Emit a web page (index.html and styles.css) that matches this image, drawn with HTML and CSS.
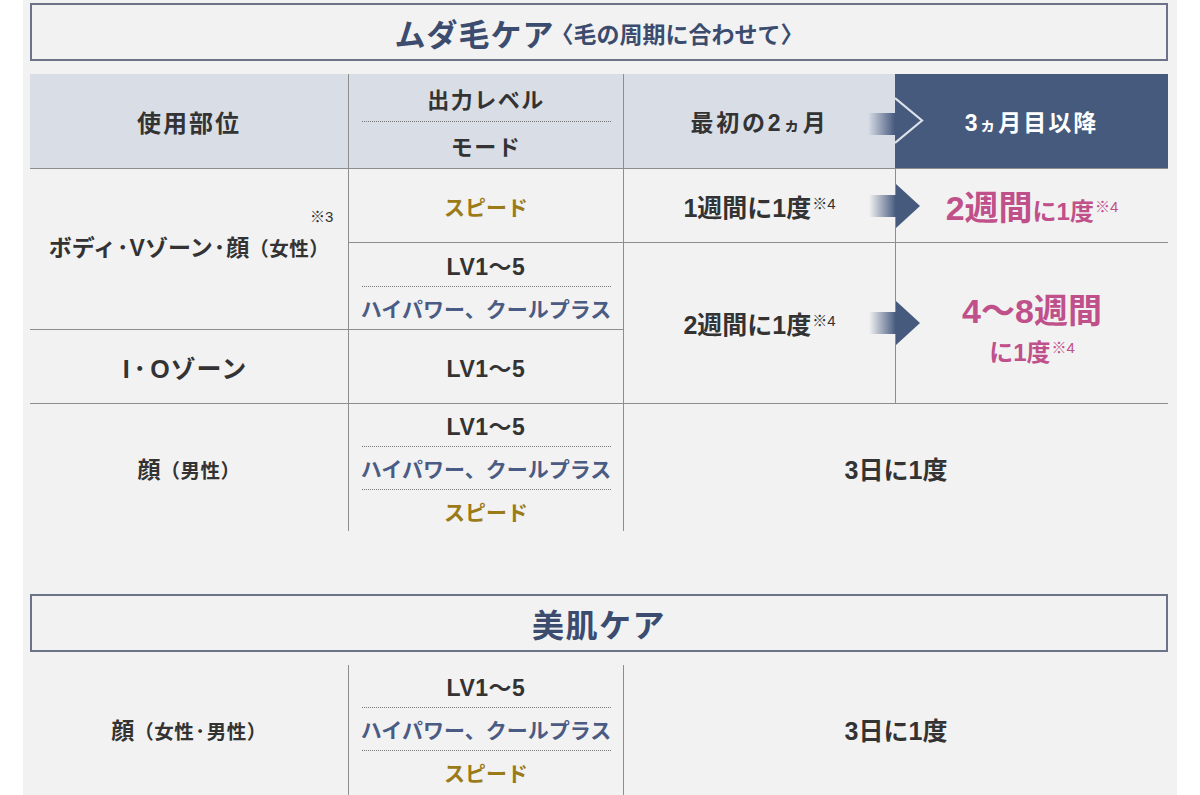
FILE: index.html
```html
<!DOCTYPE html>
<html lang="ja">
<head>
<meta charset="utf-8">
<link rel="stylesheet" href="styles.css">
</head>
<body>
<div class="panel">
  <div class="title-box">
    <span class="title-main">ムダ毛ケア</span><span class="title-sub">〈毛の周期に合わせて〉</span>
  </div>

  <div class="grid g1">
    <div class="hd h1"><span class="hd-label">使用部位</span></div>
    <div class="hd h2">
      <div class="stack">
        <div class="item hd-small">出力レベル</div>
        <div class="dots"></div>
        <div class="item hd-small">モード</div>
      </div>
    </div>
    <div class="hd h3">
      <span class="hd-label">最初の2<span class="small-ka">ヵ</span>月</span>
      <span class="bar head-bar"></span>
    </div>
    <div class="hd h4">
      <svg class="chevron" width="30" height="48" viewBox="0 0 30 48"><polyline points="0,1 27,23.5 0,46" fill="none" stroke="#dde1ea" stroke-width="2.2"/></svg>
      <span class="hd-label white">3<span class="small-ka">ヵ</span>月目以降</span>
    </div>

    <div class="c c-body"><span class="part">ボディ<span class="mdot">･</span>Vゾーン<span class="mdot">･</span>顔<span class="paren">（女性）</span><span class="note3">※3</span></span></div>
    <div class="c c-speed bl"><span class="gold">スピード</span></div>
    <div class="c c-w1 bl"><span class="freq">1週間に1度<sup class="n">※4</sup></span></div>
    <div class="c c-w2 bl">
      <span class="arrow"><span class="bar"></span><span class="tri"></span></span>
      <span class="pink"><span class="big">2週間</span>に1度<sup class="n">※4</sup></span>
    </div>

    <div class="c c-lvhp bl">
      <div class="stack">
        <div class="item lv">LV1～5</div>
        <div class="dots"></div>
        <div class="item navy">ハイパワー、クールプラス</div>
      </div>
    </div>
    <div class="c c-2w bl"><span class="freq">2週間に1度<sup class="n">※4</sup></span></div>
    <div class="c c-48 bl">
      <span class="arrow"><span class="bar"></span><span class="tri"></span></span>
      <div class="pink col">
        <span class="big">4～8週間</span>
        <span>に1度<sup class="n">※4</sup></span>
      </div>
    </div>

    <div class="c c-io"><span class="part">I<span class="mdot">･</span>Oゾーン</span></div>
    <div class="c c-iolv bl"><span class="lv">LV1～5</span></div>

    <div class="c c-face"><span class="part">顔<span class="paren">（男性）</span></span></div>
    <div class="c c-facemode bl">
      <div class="stack">
        <div class="item lv">LV1～5</div>
        <div class="dots"></div>
        <div class="item navy">ハイパワー、クールプラス</div>
        <div class="dots"></div>
        <div class="item gold">スピード</div>
      </div>
    </div>
    <div class="c c-3d bl"><span class="freq">3日に1度</span></div>
  </div>

  <div class="title-box second">
    <span class="title-main">美肌ケア</span>
  </div>

  <div class="grid g2">
    <div class="c c-b1"><span class="part">顔<span class="paren">（女性<span class="mdot">･</span>男性）</span></span></div>
    <div class="c c-b2 bl">
      <div class="stack">
        <div class="item lv">LV1～5</div>
        <div class="dots"></div>
        <div class="item navy">ハイパワー、クールプラス</div>
        <div class="dots"></div>
        <div class="item gold">スピード</div>
      </div>
    </div>
    <div class="c c-b3 bl"><span class="freq">3日に1度</span></div>
  </div>
</div>
</body>
</html>
```

FILE: styles.css
```css
* { box-sizing: border-box; }

html, body {
  margin: 0;
  padding: 0;
  background: #ffffff;
}

body {
  font-family: "Liberation Sans", "Noto Sans CJK JP", sans-serif;
  font-weight: 700;
  color: #333333;
  width: 1200px;
  height: 795px;
  overflow: hidden;
}

.panel {
  margin-left: 23px;
  width: 1154px;
  min-height: 795px;
  background: #f2f2f2;
  padding: 3px 9px 0 7px;
}

.title-box {
  height: 58px;
  border: 2px solid #6c7287;
  display: flex;
  align-items: center;
  justify-content: center;
  color: #3b4c6e;
}

.title-main {
  font-size: 31px;
  letter-spacing: 1px;
}

.title-sub {
  font-size: 23px;
  margin-left: -4px;
  padding-top: 2px;
}

.title-box.second {
  margin-top: 63px;
}

.title-box.second .title-main {
  font-size: 32px;
  letter-spacing: 1.5px;
}

.grid {
  display: grid;
  grid-template-columns: 318px 275px 272px 273px;
  margin-top: 13px;
}

.g1 {
  grid-template-rows: 94px 74px 87px 74px 128px;
}

.g2 {
  grid-template-rows: 140px;
}

.hd {
  background: #d9dde6;
  display: flex;
  align-items: center;
  justify-content: center;
  position: relative;
  font-size: 24px;
}

.hd-label {
  letter-spacing: 2px;
}

.h3 .hd-label {
  font-size: 23px;
  letter-spacing: 2.8px;
}

.h4 .hd-label {
  font-size: 23px;
  letter-spacing: 2px;
}

.hd-small {
  font-size: 22px;
  letter-spacing: 1.5px;
}

.h1 { grid-column: 1; grid-row: 1; }
.h2 { grid-column: 2; grid-row: 1; border-left: 1px solid #8e8e8e; }
.h3 { grid-column: 3; grid-row: 1; border-left: 1px solid #8e8e8e; }
.h4 { grid-column: 4; grid-row: 1; background: #465a7e; }

.white { color: #ffffff; }

.small-ka {
  font-size: 0.72em;
}

.chevron {
  position: absolute;
  left: 0;
  top: 23px;
}

.bar {
  display: block;
  width: 27px;
  height: 22px;
  background: linear-gradient(to right, rgba(70, 90, 126, 0), #465a7e);
}

.head-bar {
  position: absolute;
  right: 0;
  top: 39px;
}

.c {
  display: flex;
  align-items: center;
  justify-content: center;
  position: relative;
  font-size: 21px;
  border-top: 1px solid #8e8e8e;
}

.bl { border-left: 1px solid #8e8e8e; }

.c-body { grid-column: 1; grid-row: 2 / 4; }
.c-speed { grid-column: 2; grid-row: 2; }
.c-w1 { grid-column: 3; grid-row: 2; }
.c-w2 { grid-column: 4; grid-row: 2; }
.c-lvhp { grid-column: 2; grid-row: 3; }
.c-2w { grid-column: 3; grid-row: 3 / 5; }
.c-48 { grid-column: 4; grid-row: 3 / 5; }
.c-io { grid-column: 1; grid-row: 4; }
.c-iolv { grid-column: 2; grid-row: 4; }
.c-face { grid-column: 1; grid-row: 5; }
.c-facemode { grid-column: 2; grid-row: 5; }
.c-3d { grid-column: 3 / 5; grid-row: 5; }

.g2 .c { border-top: none; }
.c-b1 { grid-column: 1; grid-row: 1; align-items: flex-start; padding-top: 47px; }
.c-b2 { grid-column: 2; grid-row: 1; align-items: flex-start; }
.c-b3 { grid-column: 3 / 5; grid-row: 1; align-items: flex-start; padding-top: 46px; }

.part {
  position: relative;
  font-size: 23px;
}

.c-io .part {
  font-size: 25px;
  letter-spacing: 1px;
  margin-left: -8px;
}

.mdot {
  margin: 0 1px;
}

.c-io .mdot {
  margin: 0 3px;
}

.paren {
  font-size: 19.5px;
  letter-spacing: 0.5px;
}

.c-body .part { margin-top: -6px; }

.note3 {
  position: absolute;
  right: -4px;
  top: -24px;
  font-size: 15px;
  font-weight: 400;
}

.stack {
  display: flex;
  flex-direction: column;
  align-items: center;
  width: 249px;
}

.item {
  height: 42px;
  display: flex;
  align-items: center;
  justify-content: center;
  white-space: nowrap;
}

.hd .item { height: 46px; }

.lv {
  font-size: 23px;
  letter-spacing: 0.5px;
}

.dots {
  width: 249px;
  height: 0;
  border-top: 1px dotted #777777;
}

.navy { color: #4b5b83; }
.gold { color: #9b7a18; }

.freq {
  font-size: 25px;
}

sup.n {
  font-size: 15px;
  font-weight: 400;
  vertical-align: 0;
  position: relative;
  top: -8px;
  margin-left: 1px;
}

.pink {
  color: #c0508a;
  font-size: 24px;
}

.pink .big {
  font-size: 34px;
}

.pink.col {
  display: flex;
  flex-direction: column;
  align-items: center;
  line-height: 1.25;
  gap: 6px;
  margin-top: 12px;
}

.arrow {
  position: absolute;
  left: -27px;
  top: 50%;
  transform: translateY(-50%);
  display: flex;
  align-items: center;
}

.arrow .bar {
  height: 22px;
}

.tri {
  width: 0;
  height: 0;
  border-top: 22px solid transparent;
  border-bottom: 22px solid transparent;
  border-left: 24px solid #465a7e;
}
```
